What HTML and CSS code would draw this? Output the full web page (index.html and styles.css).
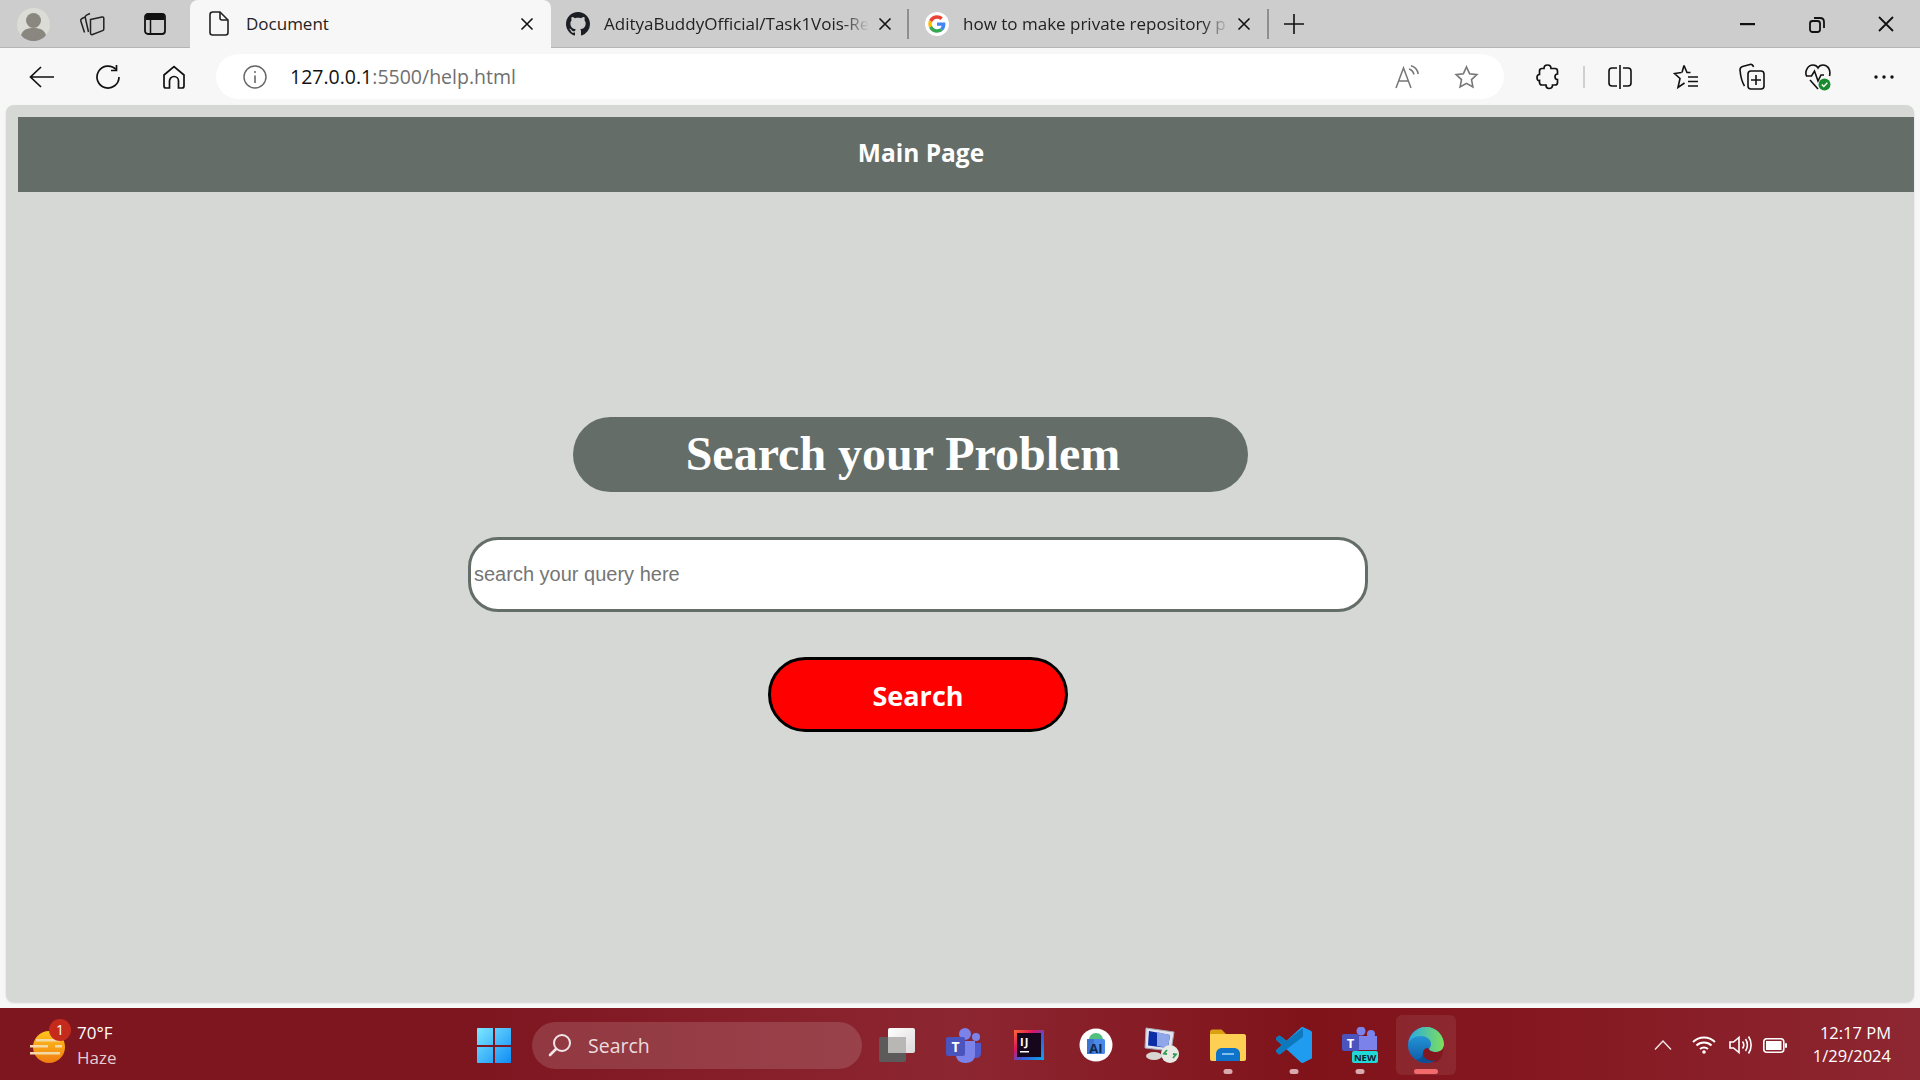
FILE: index.html
```html
<!DOCTYPE html>
<html lang="en">
<head>
  <meta charset="UTF-8">
  <meta name="viewport" content="width=device-width, initial-scale=1.0">
  <title>Document</title>
  <link rel="stylesheet" href="styles.css">
</head>
<body>
  <div class="tabstrip">
    <div class="strip-btn">
      <svg width="33" height="33" viewBox="0 0 33 33"><circle cx="16.5" cy="16.5" r="16.5" fill="#dcdcd6"/><ellipse cx="16.5" cy="12.5" rx="7.5" ry="7.5" fill="#8a8780"/><path d="M4 27c2-6 7-7 12.500-7s10.500 1 12.500 7c-3 4-8 6-12.500 6S7 31 4 27z" fill="#8a8780"/></svg>
    </div>
    <div class="strip-btn strip-btn-cards">
      <svg width="26" height="24" viewBox="0 0 26 24" fill="none" stroke="#222" stroke-width="1.500"><path d="M11.500 7.500 23 5c1-.2 1.800.3 1.800 1.200V17c0 .8-.4 1.300-1.200 1.600L13.500 22.500c-1.100.4-2-.2-2-1.300z"/><path d="M11 1.500 7.500 3.200C6.300 3.800 6 4.700 6.300 5.800L9.500 20"/><path d="M6.500 4.800 3 6.500C1.800 7.100 1.500 8 1.800 9L5.500 20.500"/></svg>
    </div>
    <div class="strip-btn strip-btn-last">
      <svg width="22" height="22" viewBox="0 0 22 22" fill="none"><rect x="1" y="1" width="20" height="20" rx="3" stroke="#111" stroke-width="1.800"/><path d="M2 2h18v5H2z" fill="#111"/><path d="M6.500 7v13" stroke="#111" stroke-width="1.500"/></svg>
    </div>

    <div class="tab tab-active">
      <svg class="tab-icon" width="20" height="25" viewBox="0 0 20 25" fill="none" stroke="#222" stroke-width="1.600"><path d="M4 1h7l8 8v12.500c0 1.500-1 2.500-2.500 2.500h-13C2 24 1 23 1 21.500v-18C1 2 2 1 4 1z"/><path d="M11 1v6c0 1.500.7 2 2 2h6"/></svg>
      <span class="tab-title">Document</span>
      <svg class="tab-close" width="14" height="14" viewBox="0 0 14 14" stroke="#111" stroke-width="1.600"><path d="M1.500 1.500l11 11M12.500 1.500l-11 11"/></svg>
    </div>
    <div class="tab tab-github">
      <svg class="tab-icon" width="24" height="24" viewBox="0 0 16 16" fill="#1b1f23"><path d="M8 0C3.580 0 0 3.580 0 8c0 3.540 2.290 6.530 5.470 7.590.400.070.550-.170.550-.380 0-.190-.010-.820-.010-1.490-2.010.370-2.530-.490-2.690-.940-.090-.230-.480-.940-.820-1.130-.280-.150-.680-.520-.010-.530.630-.010 1.080.580 1.230.820.720 1.210 1.870.870 2.330.660.070-.520.280-.870.510-1.070-1.780-.200-3.640-.890-3.640-3.950 0-.870.310-1.590.820-2.150-.080-.200-.360-1.020.080-2.120 0 0 .670-.210 2.200.820.640-.180 1.320-.270 2-.270.680 0 1.360.090 2 .270 1.530-1.040 2.200-.820 2.200-.820.440 1.100.160 1.920.080 2.120.510.560.820 1.270.820 2.150 0 3.070-1.870 3.750-3.650 3.950.290.250.540.730.540 1.480 0 1.070-.010 1.930-.010 2.200 0 .210.150.460.550.380A8.013 8.013 0 0016 8c0-4.420-3.580-8-8-8z"/></svg>
      <span class="tab-title tab-fade">AdityaBuddyOfficial/Task1Vois-Re</span>
      <svg class="tab-close" width="14" height="14" viewBox="0 0 14 14" stroke="#111" stroke-width="1.600"><path d="M1.500 1.500l11 11M12.500 1.500l-11 11"/></svg>
    </div>
    <div class="tab-sep"></div>
    <div class="tab tab-google">
      <svg class="tab-icon" width="24" height="24" viewBox="-9 -9 66 66"><circle cx="24" cy="24" r="33" fill="#fff"/><path fill="#EA4335" d="M24 9.500c3.540 0 6.710 1.220 9.210 3.600l6.850-6.850C35.900 2.380 30.470 0 24 0 14.620 0 6.510 5.380 2.560 13.220l7.980 6.190C12.430 13.720 17.740 9.500 24 9.500z"/><path fill="#4285F4" d="M46.980 24.550c0-1.570-.150-3.090-.380-4.550H24v9.020h12.940c-.580 2.960-2.260 5.480-4.780 7.180l7.730 6c4.510-4.180 7.090-10.360 7.090-17.650z"/><path fill="#FBBC05" d="M10.530 28.590c-.480-1.450-.760-2.990-.760-4.590s.270-3.140.760-4.590l-7.980-6.190C.920 16.460 0 20.120 0 24c0 3.880.920 7.540 2.560 10.780l7.970-6.190z"/><path fill="#34A853" d="M24 48c6.480 0 11.930-2.130 15.890-5.810l-7.730-6c-2.150 1.450-4.920 2.300-8.160 2.300-6.260 0-11.570-4.220-13.470-9.910l-7.980 6.190C6.510 42.620 14.620 48 24 48z"/></svg>
      <span class="tab-title tab-fade">how to make private repository p</span>
      <svg class="tab-close" width="14" height="14" viewBox="0 0 14 14" stroke="#111" stroke-width="1.600"><path d="M1.500 1.500l11 11M12.500 1.500l-11 11"/></svg>
    </div>
    <div class="tab-sep"></div>
    <div class="new-tab">
      <svg width="22" height="22" viewBox="0 0 22 22" stroke="#111" stroke-width="1.600"><path d="M11 1v20M1 11h20"/></svg>
    </div>

    <div class="window-controls">
      <div class="window-btn"><svg width="15" height="3" viewBox="0 0 15 3"><path d="M0 0h15v2.200H0z" fill="#111"/></svg></div>
      <div class="window-btn"><svg width="16" height="17" viewBox="0 0 16 17" fill="none" stroke="#111" stroke-width="1.800"><rect x="1" y="5" width="10" height="11" rx="2.500"/><path d="M5 2h6c2.500 0 4 1.500 4 4v6"/></svg></div>
      <div class="window-btn"><svg width="16" height="16" viewBox="0 0 16 16" stroke="#111" stroke-width="1.800"><path d="M1 1l14 14M15 1L1 15"/></svg></div>
    </div>
  </div>

  <div class="toolbar">
    <div class="tool-btn"><svg width="26" height="22" viewBox="0 0 26 22" fill="none" stroke="#111" stroke-width="1.700"><path d="M25 11H2M12 1 1.500 11 12 21"/></svg></div>
    <div class="tool-btn"><svg width="26" height="26" viewBox="0 0 26 26" fill="none" stroke="#111" stroke-width="1.700"><path d="M21 5.500A11 11 0 1 0 24 13"/><path d="M21.500 1v5.500H16"/></svg></div>
    <div class="tool-btn"><svg width="22" height="24" viewBox="0 0 22 24" fill="none" stroke="#111" stroke-width="1.700"><path d="M1 10 11 1.500 21 10v11c0 1-.8 2-2 2h-3.500v-7c0-2.500-2-4.500-4.500-4.500S6.500 13.500 6.500 16v7H3c-1.200 0-2-1-2-2z"/></svg></div>

    <div class="address-bar">
      <svg class="info-icon" width="24" height="24" viewBox="0 0 24 24" fill="none" stroke="#666" stroke-width="1.400"><circle cx="12" cy="12" r="11"/><path d="M12 10.500v7.500" stroke-width="1.600"/><circle cx="12" cy="7" r="1" fill="#666" stroke="none"/></svg>
      <span class="url"><span class="url-host">127.0.0.1</span>:5500/help.html</span>
      <svg class="read-icon" width="24" height="24" viewBox="0 0 24 24" fill="none" stroke="#777" stroke-width="1.500"><path d="M1 23 8.500 3 16 23M3.800 16h9.400"/><path d="M14 4c2.500.7 4.200 2.500 5 5.500M16 .8c3.500 1 6.500 4 7.300 8.200"/></svg>
      <svg class="star-icon" width="25" height="24" viewBox="0 0 25 24" fill="none" stroke="#777" stroke-width="1.600"><path d="M12.500 2l3.100 6.700 7.300.9-5.400 5 1.400 7.300-6.400-3.600-6.400 3.600 1.400-7.300-5.400-5 7.300-.9z"/></svg>
    </div>

    <div class="tool-btn tool-btn-first"><svg width="24" height="26" viewBox="0 0 24 26" fill="none" stroke="#111" stroke-width="1.700"><path d="M8 4.500C8 2.500 9.500 1 11.500 1S15 2.500 15 4.500h4c1.500 0 2.500 1 2.500 2.500v3c-1.800 0-2.500 1.200-2.500 2.800s.7 2.700 2.500 2.700v3c0 1.500-1 2.500-2.500 2.500h-2.500c0 2-1.500 3.500-3.500 3.500s-3-1.500-3-3.500H6c-1.500 0-2.500-1-2.500-2.500v-2C2 17 1 15.500 1 13.500S2 10.500 3.500 10.500V7C3.500 5.500 4.500 4.500 6 4.500z"/></svg></div>
    <div class="tool-sep"></div>
    <div class="tool-btn"><svg width="24" height="24" viewBox="0 0 24 24" fill="none" stroke="#111" stroke-width="1.600"><path d="M9 3H4C2 3 1 4 1 6v12c0 2 1 3 3 3h5M15 3h5c2 0 3 1 3 3v12c0 2-1 3-3 3h-5"/><path d="M12 0v24"/></svg></div>
    <div class="tool-btn"><svg width="26" height="26" viewBox="0 0 26 26" fill="none" stroke="#111" stroke-width="1.600"><path d="M11 1.500 14 8.500h3.500M9 8.500l2-7M8.500 8.500 1.500 9.500l5.500 5-2 9 6.500-4.500"/><path d="M15 13h10M15 17.500h10M15 22h10"/></svg></div>
    <div class="tool-btn"><svg width="26" height="28" viewBox="0 0 26 28" fill="none" stroke="#111" stroke-width="1.600"><rect x="9" y="8" width="16" height="18" rx="3"/><path d="M17 12v10M12 17h10"/><path d="M5.500 23C3 19 1.500 13 1 7c0-2 1-3 2.500-3.500L11 1.500c2-.5 3 .5 3.500 2.500"/></svg></div>
    <div class="tool-btn">
      <svg width="26" height="28" viewBox="0 0 26 28" fill="none" stroke="#111" stroke-width="1.600"><path d="M1.500 13C-.5 8 3 2 8 2c2 0 4 1 5 3 1-2 3-3 5-3 5 0 8 5 6.500 11"/><path d="M1 13h5.500L9.500 8l3.500 10 3-6h3"/><path d="M5 17 13 26"/><circle cx="19.500" cy="21.500" r="6" fill="#1a8a2e" stroke="none"/><path d="M16.800 21.500l2 2 3.500-3.700" stroke="#fff" stroke-width="1.500"/></svg>
    </div>
    <div class="tool-btn"><svg width="20" height="4" viewBox="0 0 20 4" fill="#111"><circle cx="2" cy="2" r="1.700"/><circle cx="10" cy="2" r="1.700"/><circle cx="18" cy="2" r="1.700"/></svg></div>
  </div>

  <main class="viewport">
    <div class="navbar">Main Page</div>
    <div class="help-form">
      <h1 class="help-title">Search your Problem</h1>
      <input class="query" type="text" placeholder="search your query here">
      <button class="search-btn">Search</button>
    </div>
  </main>

  <footer class="taskbar">
    <div class="weather">
      <span class="weather-icon">
        <svg width="36" height="34" viewBox="0 0 36 34"><defs><linearGradient id="sun" x1="0" y1="0" x2="0" y2="1"><stop offset="0" stop-color="#ffc61e"/><stop offset="1" stop-color="#f07c10"/></linearGradient></defs><circle cx="20" cy="16" r="16" fill="url(#sun)"/><path d="M7 8h24v2.500H7zM1 14h18v2.500H1zM26 14h7v2.500h-7zM1 21h30v2.500H1z" fill="#f3d9a6"/></svg>
        <span class="weather-badge">1</span>
      </span>
      <div class="weather-text">
        <div class="temp">70°F</div>
        <div class="haze">Haze</div>
      </div>
    </div>

    <svg class="win-logo" width="34" height="35" viewBox="0 0 34 35"><defs><linearGradient id="win" x1="0" y1="0" x2="1" y2="1"><stop offset="0" stop-color="#7de8ff"/><stop offset="1" stop-color="#0f8cf5"/></linearGradient></defs><path d="M0 1c0-.6.4-1 1-1h15v17H0zM18 0h15c.6 0 1 .4 1 1v16H18zM0 19h16v16H1c-.6 0-1-.4-1-1zM18 19h16v15c0 .6-.4 1-1 1H18z" fill="url(#win)"/></svg>

    <div class="task-search">
      <svg width="24" height="24" viewBox="0 0 24 24" fill="none" stroke="#f2e6e8" stroke-width="2"><circle cx="14" cy="10" r="8"/><path d="M8 16 2 22" stroke-width="2.600" stroke-linecap="round"/></svg>
      <span>Search</span>
    </div>

    <div class="task-icons">
      <div class="task-slot">
        <svg width="36" height="34" viewBox="0 0 36 34"><defs><linearGradient id="cp" x1="0" y1="0" x2="1" y2="1"><stop offset="0" stop-color="#fff"/><stop offset="1" stop-color="#dcd9d9"/></linearGradient></defs><rect x="0" y="9" width="27" height="25" rx="2" fill="#5d5a5b"/><rect x="9" y="0" width="27" height="25" rx="2" fill="url(#cp)"/><rect x="9" y="9" width="18" height="16" fill="#b9b6b6"/></svg>
      </div>
      <div class="task-slot">
        <svg width="36" height="36" viewBox="0 0 36 36"><circle cx="31" cy="10" r="4" fill="#7b83eb"/><path d="M26 16h10v10c0 3-2 5-5 5s-5-2-5-5z" fill="#5059c9"/><circle cx="20" cy="7" r="6" fill="#7b83eb"/><path d="M11 14h19v14c0 5-4 8-9.500 8S11 33 11 28z" fill="#7b83eb"/><rect x="1" y="10" width="19" height="19" rx="2" fill="#4b53bc"/><text x="10.500" y="25" class="svg-letter" font-size="14">T</text></svg>
      </div>
      <div class="task-slot">
        <svg width="30" height="30" viewBox="0 0 30 30"><defs><linearGradient id="ij" x1="0" y1="0" x2="1" y2="1"><stop offset="0" stop-color="#fe6b2c"/><stop offset=".35" stop-color="#dd1265"/><stop offset=".6" stop-color="#3d5bd8"/><stop offset="1" stop-color="#08a7f0"/></linearGradient></defs><rect width="30" height="30" fill="url(#ij)"/><rect x="3" y="3" width="24" height="24" fill="#16071c"/><text x="6" y="16" class="svg-ij" font-size="11">IJ</text><rect x="6" y="21" width="9" height="1.500" fill="#fff"/></svg>
      </div>
      <div class="task-slot">
        <svg width="34" height="34" viewBox="0 0 34 34"><circle cx="17" cy="17" r="16.500" fill="#fff"/><path d="M10 12c0-4 3-7 7-7s7 3 7 7z" fill="#52bf7c"/><rect x="8" y="11" width="18" height="15" rx="1.500" fill="#4a89e8"/><path d="M8 11h7v15H8z" fill="#3b74d0"/><text x="17" y="25" class="svg-ai" font-size="13">AI</text></svg>
      </div>
      <div class="task-slot">
        <svg width="38" height="38" viewBox="0 0 38 38"><path d="M3 2 31 6 28 25 2 22z" fill="#dfe4ef" stroke="#a5a9b4"/><path d="M6 5 27 9 25 22 5 19.500z" fill="#0b2ea6"/><path d="M14 6 27 9 25 22 14 20z" fill="#8fa6e8"/><ellipse cx="11" cy="30" rx="8" ry="4" fill="#d8d4d2"/><circle cx="27" cy="28" r="9" fill="#e9e9e6"/><path d="M24 24l-3 3.500 3 .5M30 32l3-3.500-3-.5" stroke="#2e9e4f" stroke-width="1.800" fill="none"/></svg>
      </div>
      <div class="task-slot">
        <svg width="36" height="32" viewBox="0 0 36 32"><path d="M0 3c0-1.500 1-2.500 2.500-2.500h9L16 5h-16z" fill="#d9a011"/><path d="M0 5h34c1 0 2 1 2 2v23c0 1-1 2-2 2H2c-1 0-2-1-2-2z" fill="#fdcf52"/><path d="M6 32v-7c0-4 3-6 6-6h12c3 0 6 2 6 6v7z" fill="#0f74c9"/><path d="M12 25h12" stroke="#a6d6f5" stroke-width="1.500"/></svg>
        <span class="running-dot"></span>
      </div>
      <div class="task-slot">
        <svg width="36" height="36" viewBox="0 0 100 100"><path fill="#1f9cf0" d="M70.900 99.300c1.600.6 3.400.6 5-.2l20.600-9.900c2.200-1 3.500-3.100 3.500-5.500V16.300c0-2.400-1.400-4.500-3.500-5.600L75.900.9c-2.100-1-4.500-.8-6.400.6-.3.2-.5.4-.8.6L29.300 38.100 12 25c-1.600-1.200-3.900-1.100-5.400.2l-5.500 5c-1.800 1.700-1.800 4.500 0 6.100l15 13.700-15 13.600c-1.800 1.700-1.800 4.500 0 6.100l5.500 5c1.500 1.400 3.800 1.500 5.400.3L29.300 62l39.400 36c.7.600 1.400 1 2.200 1.300zM75 27.300 45.100 50 75 72.700V27.300z"/><path fill="#0e78bd" d="M12 25c-1.600-1.200-3.900-1.100-5.400.2l-5.500 5c-1.800 1.700-1.800 4.500 0 6.100l15 13.700-15 13.600c-1.800 1.700-1.800 4.500 0 6.100l5.500 5c1.500 1.400 3.800 1.500 5.400.3L75 27.300V3L29.300 38.100z"/></svg>
        <span class="running-dot"></span>
      </div>
      <div class="task-slot">
        <svg width="36" height="36" viewBox="0 0 36 36"><circle cx="29" cy="7" r="4" fill="#7b83eb"/><circle cx="19" cy="4" r="4.500" fill="#7b83eb"/><path d="M12 9h23v14H12z" fill="#7b83eb"/><rect x="0" y="7" width="17" height="17" rx="2" fill="#4b53bc"/><text x="8.500" y="21" class="svg-letter" font-size="13">T</text><rect x="10" y="24" width="26" height="12" rx="2" fill="#1fd9d9"/><text x="23" y="33.500" class="svg-new" font-size="9.500">NEW</text></svg>
        <span class="running-dot"></span>
      </div>
      <div class="task-slot task-slot-active">
        <svg width="36" height="36" viewBox="0 0 36 36"><defs><linearGradient id="edge-a" x1="0" y1="0" x2="0" y2="1"><stop offset="0" stop-color="#2ba6e4"/><stop offset="1" stop-color="#0d5aa7"/></linearGradient><linearGradient id="edge-b" x1="0" y1="0" x2="1" y2="0"><stop offset="0" stop-color="#27a9e6"/><stop offset="1" stop-color="#7fe05a"/></linearGradient></defs><circle cx="18" cy="18" r="18" fill="url(#edge-a)"/><path d="M18 0c10 0 18 8 18 18 0 4-3 7-8 7-4 0-7-1.500-7-3 0-1 2-2 2-5 0-5-5-8-10-8-6 0-11 3-12.500 7C2 7 9 0 18 0z" fill="url(#edge-b)"/><path d="M36 18c-1 5-4 7-8 7-5 0-7-2-7-3l-1-1c-3 0-5 2-5 6 0 4 5 9 14 8 4-3 7-9 7-17z" fill="#84161f"/><path d="M15 27c1 5 7 9 14 5-4 3-8 4-11 4-4 0-8-1.500-10-4 3 1 5 0 7-5z" fill="#0d4f96"/></svg>
        <span class="running-bar"></span>
      </div>
    </div>

    <div class="tray">
      <svg class="tray-chevron" width="18" height="10" viewBox="0 0 18 10" fill="none" stroke="#f2e6e8" stroke-width="1.400"><path d="M1 9.500 9 1l8 8.500"/></svg>
      <svg class="tray-wifi" width="24" height="18" viewBox="0 0 24 18" fill="none" stroke="#fff" stroke-width="1.800"><path d="M1 6c6-6 16-6 22 0M4.500 9.500c4-4 11-4 15 0M8 13c2.200-2 5.800-2 8 0"/><circle cx="12" cy="16" r="1.800" fill="#fff" stroke="none"/></svg>
      <svg class="tray-volume" width="24" height="20" viewBox="0 0 24 20" fill="none" stroke="#fff" stroke-width="1.600"><path d="M1 7h3.500L10 2.500v15L4.500 13H1z"/><path d="M13.500 6.500c1.500 2 1.500 5 0 7M16.500 4c2.500 3.500 2.500 8.500 0 12M19.500 1.500c3.500 5 3.500 12 0 17"/></svg>
      <svg class="tray-battery" width="24" height="15" viewBox="0 0 24 15"><rect x=".8" y=".8" width="20" height="13.400" rx="3" fill="none" stroke="#fff" stroke-width="1.600"/><rect x="3" y="3" width="15.500" height="9" fill="#fff"/><rect x="22" y="5" width="2" height="5" rx="1" fill="#fff"/></svg>
      <div class="clock">
        <div>12:17 PM</div>
        <div>1/29/2024</div>
      </div>
    </div>
  </footer>
</body>
</html>
```

FILE: styles.css
```css
* {
  box-sizing: border-box;
}

html,
body {
  height: 100%;
}

body {
  margin: 0;
  display: flex;
  flex-direction: column;
  overflow: hidden;
  background-color: #f7f7f7;
  font-family: "Open Sans", sans-serif;
  color: #111;
}

svg {
  display: block;
  flex-shrink: 0;
}

/* tab strip */
.tabstrip {
  display: flex;
  align-items: center;
  height: 48px;
  padding-left: 3px;
  background-color: #cdcdcd;
  box-shadow: inset 0 -1px 0 #b5b5b5;
}

.strip-btn {
  display: flex;
  justify-content: center;
  width: 60px;
}

.strip-btn-cards {
  margin-left: -1px;
}

.strip-btn-last {
  margin: 0 5px 0 3px;
}

.tab {
  display: flex;
  align-items: center;
  height: 48px;
  padding-bottom: 1px;
  font-size: 17px;
  color: #222;
}

.tab-active {
  width: 361px;
  padding-left: 19px;
  background-color: #f7f7f7;
  border-radius: 8px 8px 0 0;
}

.tab-github {
  width: 356px;
  padding-left: 15px;
}

.tab-google {
  width: 358px;
  padding-left: 16px;
}

.tab-icon {
  margin-right: 14px;
}

.tab-active .tab-icon {
  margin-right: 17px;
}

.tab-title {
  flex: 1;
  min-width: 0;
  white-space: nowrap;
}

.tab-fade {
  -webkit-mask-image: linear-gradient(to right, #000 90%, transparent 100%);
  mask-image: linear-gradient(to right, #000 90%, transparent 100%);
}

.tab-close {
  margin: 0 17px;
}

.tab-github .tab-close {
  margin: 0 15px 0 9px;
}

.tab-google .tab-close {
  margin: 0 16px 0 8px;
}

.tab-sep {
  width: 2px;
  height: 30px;
  background-color: #8f8f8f;
}

.new-tab {
  margin-left: 14px;
}

.window-controls {
  display: flex;
  margin-left: auto;
}

.window-btn {
  display: flex;
  justify-content: center;
  align-items: center;
  width: 69px;
  height: 46px;
}

/* toolbar */
.toolbar {
  display: flex;
  align-items: center;
  height: 57px;
  padding-left: 9px;
}

.tool-btn {
  display: flex;
  justify-content: center;
  align-items: center;
  width: 66px;
}

.tool-btn-first {
  margin-left: 11px;
}

.tool-sep {
  width: 2px;
  height: 22px;
  margin: 0 2px;
  background-color: #cfcfcf;
}

.address-bar {
  display: flex;
  align-items: center;
  width: 1288px;
  height: 45px;
  margin-left: 9px;
  padding-left: 27px;
  background-color: #fff;
  border-radius: 23px;
}

.url {
  flex: 1;
  margin-left: 23px;
  font-size: 19.500px;
  color: #6f6f6f;
}

.url-host {
  color: #111;
}

.read-icon {
  margin-right: 35px;
}

.star-icon {
  margin-right: 25px;
}

/* page inside the browser */
.viewport {
  flex: 1;
  margin: 0 6px;
  padding: 12px 0 0 12px;
  background-color: #d6d8d5;
  border-radius: 8px;
  box-shadow: 0 1px 2px rgba(0, 0, 0, .15);
}

.navbar {
  display: flex;
  justify-content: center;
  align-items: center;
  height: 75px;
  padding: 0 90px 4px 0;
  background-color: #646d67;
  color: #fff;
  font-size: 24.500px;
  font-weight: 700;
}

.help-form {
  display: flex;
  flex-direction: column;
  gap: 45px;
  width: 900px;
  margin: 225px 0 0 450px;
}

.help-title {
  width: 675px;
  height: 75px;
  margin: 0 0 0 105px;
  padding-right: 15px;
  background-color: #646d67;
  border-radius: 38px;
  color: #fff;
  font-family: "Liberation Serif", serif;
  font-size: 48px;
  font-weight: 700;
  line-height: 73px;
  text-align: center;
}

.query {
  width: 900px;
  height: 75px;
  padding: 0 3px;
  background-color: #fff;
  border: 3px solid #646d67;
  border-radius: 30px;
  font-family: "Liberation Sans", sans-serif;
  font-size: 20px;
  outline: none;
}

.query::placeholder {
  color: #757575;
}

.search-btn {
  align-self: center;
  width: 300px;
  height: 75px;
  padding-top: 3px;
  background-color: #f00;
  border: 3px solid #000;
  border-radius: 38px;
  color: #fff;
  font-family: "Open Sans", sans-serif;
  font-size: 27px;
  font-weight: 700;
}

/* windows taskbar */
.taskbar {
  display: flex;
  align-items: center;
  flex-shrink: 0;
  height: 72px;
  margin-top: 6px;
  padding: 2px 0 0 30px;
  background: linear-gradient(to right, #7e1620 0%, #7e1620 25%, #8c2631 50%, #80131a 68%, #84161f 78%, #8d2731 100%);
  color: #fff;
}

.weather {
  display: flex;
  align-items: center;
  width: 447px;
}

.weather-icon {
  position: relative;
  width: 48px;
  margin: 5px 0 0 -1px;
}

.weather-badge {
  position: absolute;
  top: -12px;
  left: 20px;
  width: 22px;
  height: 22px;
  background-color: #c42b1c;
  border-radius: 50%;
  font-size: 14px;
  line-height: 22px;
  text-align: center;
}

.weather-text {
  font-size: 17px;
  line-height: 25px;
}

.haze {
  color: #e3cdd0;
}

.task-search {
  display: flex;
  align-items: center;
  gap: 16px;
  width: 330px;
  height: 47px;
  margin-left: -14px;
  padding-left: 16px;
  background-color: rgba(255, 255, 255, .14);
  border-radius: 24px;
  color: #ecdcdf;
  font-size: 19.500px;
}

.win-logo {
  margin-right: 35px;
}

.task-icons {
  display: flex;
  margin-left: 2px;
}

.task-slot {
  position: relative;
  display: flex;
  justify-content: center;
  align-items: center;
  width: 66.200px;
  height: 60px;
}

.task-slot-active {
  margin-left: 2px;
  width: 60px;
  background-color: rgba(255, 255, 255, .08);
  border-radius: 6px;
}

.running-dot,
.running-bar {
  position: absolute;
  bottom: 1px;
  left: 50%;
  height: 5px;
  border-radius: 3px;
  transform: translateX(-50%);
}

.running-dot {
  width: 9px;
  background-color: #d9a9ad;
}

.running-bar {
  width: 24px;
  background-color: #f36a6c;
}

.svg-letter,
.svg-ai,
.svg-new {
  font-family: "Open Sans", sans-serif;
  font-weight: 700;
  text-anchor: middle;
}

.svg-letter {
  fill: #fff;
}

.svg-ij {
  fill: #fff;
  font-family: "Open Sans", sans-serif;
  font-weight: 700;
  letter-spacing: 1px;
}

.svg-ai {
  fill: #10284f;
}

.svg-new {
  fill: #123;
}

.tray {
  display: flex;
  align-items: center;
  margin-left: auto;
  padding-right: 29px;
}

.tray-chevron {
  margin-right: 20px;
}

.tray-wifi {
  margin-right: 13px;
}

.tray-volume {
  margin-right: 10px;
}

.clock {
  margin: -2px 0 0 26px;
  font-size: 16.500px;
  line-height: 23px;
  text-align: right;
}
```
